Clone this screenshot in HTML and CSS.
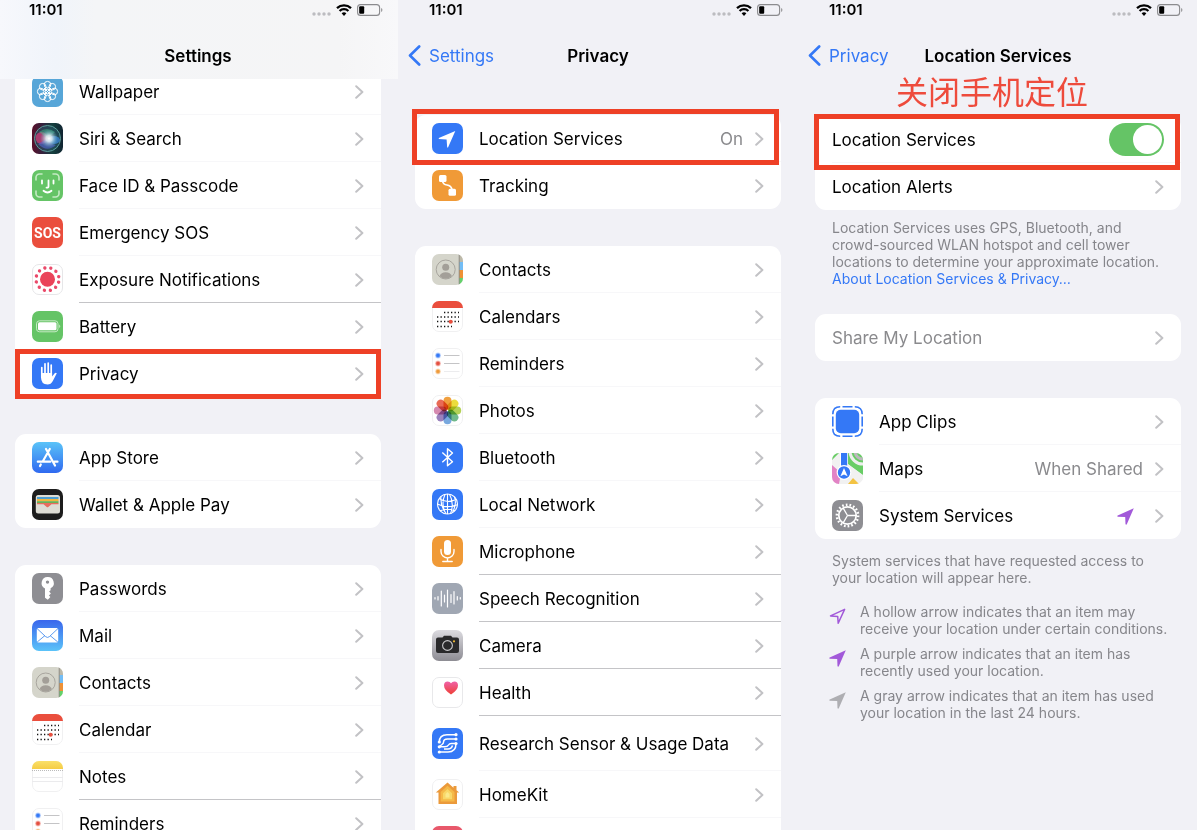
FILE: index.html
```html
<!DOCTYPE html>
<html lang="en">
<head>
<meta charset="utf-8">
<meta name="viewport" content="width=device-width, initial-scale=1">
<title>Location Services</title>
<link rel="stylesheet" href="styles.css">
</head>
<body>
<svg class="sprite" aria-hidden="true">
  <defs>
    <linearGradient id="g-store" x1="0" y1="0" x2="0" y2="1"><stop offset="0" stop-color="#5ac3f8"/><stop offset="1" stop-color="#2f69f0"/></linearGradient>
    <linearGradient id="g-mail" x1="0" y1="0" x2="0" y2="1"><stop offset="0" stop-color="#3a66ec"/><stop offset="1" stop-color="#5bc3f9"/></linearGradient>
    <linearGradient id="g-camera" x1="0" y1="0" x2="0" y2="1"><stop offset="0" stop-color="#dcdbe0"/><stop offset="1" stop-color="#8d8c93"/></linearGradient>
    <linearGradient id="g-heart" x1="0" y1="0" x2="0" y2="1"><stop offset="0" stop-color="#f062a8"/><stop offset="1" stop-color="#ee3f35"/></linearGradient>
    <linearGradient id="g-notes" x1="0" y1="0" x2="0" y2="1"><stop offset="0" stop-color="#fae06a"/><stop offset="1" stop-color="#f5cc45"/></linearGradient>
    <linearGradient id="g-siri" x1="0" y1="0" x2="1" y2="0"><stop offset="0" stop-color="#5a1029"/><stop offset=".35" stop-color="#34223f"/><stop offset=".65" stop-color="#15403f"/><stop offset="1" stop-color="#102431"/></linearGradient>
    <radialGradient id="g-siri-glow"><stop offset="0" stop-color="#fff"/><stop offset=".35" stop-color="#e6f2f7" stop-opacity=".85"/><stop offset="1" stop-color="#6db4cf" stop-opacity="0"/></radialGradient>
    <clipPath id="tile"><rect width="31" height="31" rx="7"/></clipPath>

    <symbol id="chevron" viewBox="0 0 9 14"><path d="M1.2 1.2 7.4 7 1.2 12.8" fill="none" stroke="#c2c2c5" stroke-width="2" stroke-linecap="round" stroke-linejoin="round"/></symbol>
    <symbol id="back" viewBox="0 0 13 21"><path d="M11.2 1.5 2 10.5l9.2 9" fill="none" stroke="#3478f6" stroke-width="2.6" stroke-linecap="round" stroke-linejoin="round"/></symbol>
    <symbol id="dots" viewBox="0 0 19 4"><g fill="#bcbcc0"><circle cx="2" cy="2" r="1.7"/><circle cx="7" cy="2" r="1.7"/><circle cx="12" cy="2" r="1.7"/><circle cx="17" cy="2" r="1.7"/></g></symbol>
    <symbol id="wifi" viewBox="0 0 16 12"><path d="M1 4.2a10.2 10.2 0 0 1 14 0M3.6 7a6.3 6.3 0 0 1 8.8 0" fill="none" stroke="#000" stroke-width="2.3"/><path d="M5.6 9.3a3.6 3.6 0 0 1 4.8 0L8 11.9z"/></symbol>
    <symbol id="cell" viewBox="0 0 26 12"><rect x=".6" y=".6" width="22" height="10.8" rx="3" fill="none" stroke="#8b8b8e" stroke-width="1.1"/><rect x="2.2" y="2.3" width="5" height="7.4" rx="1"/><path d="M24.2 4v4c1.6-.6 1.6-3.4 0-4z" fill="#8b8b8e"/></symbol>
    <symbol id="arrow" viewBox="0 0 17 17"><path d="M16.8.2 9.800 16.300Q9.200 17.200 8.500 16.300L8.200 9 .7 8.700Q-.2 8 .7 7.400z"/></symbol>
    <symbol id="arrow-hollow" viewBox="0 0 17 17"><path d="M15.6 1.4 9.200 15.300 8.700 8.400 1.500 7.900z" fill="none" stroke="#a259d9" stroke-width="1.5" stroke-linejoin="round"/></symbol>

    <symbol id="wallpaper" viewBox="0 0 31 31"><rect width="31" height="31" rx="7" fill="#57a6d8"/><g fill="none" stroke="#fff" stroke-width="1"><circle cx="15.5" cy="8.7" r="3.3"/><circle cx="15.5" cy="22.3" r="3.3"/><circle cx="8.7" cy="15.5" r="3.3"/><circle cx="22.3" cy="15.5" r="3.3"/><circle cx="10.7" cy="10.7" r="3.3"/><circle cx="20.3" cy="10.7" r="3.3"/><circle cx="10.7" cy="20.3" r="3.3"/><circle cx="20.3" cy="20.3" r="3.3"/><circle cx="15.5" cy="15.5" r="2.3"/><path d="M12 12l7 7M19 12l-7 7"/></g></symbol>
    <symbol id="siri" viewBox="0 0 31 31"><rect width="31" height="31" rx="7" fill="url(#g-siri)"/><circle cx="15.5" cy="15.5" r="13" fill="#29596a" fill-opacity=".55" stroke="#5c9c99"/><ellipse cx="9.500" cy="15" rx="6" ry="6" fill="#dc3f7c" opacity=".7"/><ellipse cx="22" cy="17" rx="6" ry="4" fill="#3b86d6" opacity=".75"/><path d="M7 9q8-6 16 0-5 5-8 6z" fill="#43b58a" opacity=".5"/><path d="M6 21q9 9 18 1-6-1-9-6z" fill="#5166c8" opacity=".65"/><circle cx="17" cy="15.500" r="9" fill="url(#g-siri-glow)"/></symbol>
    <symbol id="faceid" viewBox="0 0 31 31"><rect width="31" height="31" rx="7" fill="#65c466"/><path d="M4 10V7.500A3.500 3.500 0 0 1 7.500 4H10M21 4h2.500A3.500 3.500 0 0 1 27 7.500V10M27 21v2.500a3.500 3.500 0 0 1-3.500 3.500H21M10 27H7.500A3.500 3.500 0 0 1 4 23.500V21" fill="none" stroke="#c5eac4" stroke-width="1.600" stroke-linecap="round"/><path d="M10 10.500v3M21.500 10.500v3M16.500 10.500v6q0 1.400-2 1.200M11.500 20.800q4 3.500 8 0" fill="none" stroke="#fff" stroke-width="1.800" stroke-linecap="round"/></symbol>
    <symbol id="sos" viewBox="0 0 31 31"><rect width="31" height="31" rx="7" fill="#ea4e3d"/><text x="15.500" y="20.500" text-anchor="middle" class="sos-text">SOS</text></symbol>
    <symbol id="exposure" viewBox="0 0 31 31"><rect x=".5" y=".5" width="30" height="30" rx="6.500" fill="#fff" stroke="#e6e6e8"/><circle cx="15.500" cy="15.200" r="7.500" fill="#ea445a"/><g transform="rotate(15 15.500 15.200)"><circle cx="15.500" cy="15.200" r="11.500" fill="none" stroke="#ea4a6a" stroke-width="3.400" stroke-linecap="round" stroke-dasharray="0 6.021"/></g></symbol>
    <symbol id="battery" viewBox="0 0 31 31"><rect width="31" height="31" rx="7" fill="#65c466"/><rect x="4.500" y="9.800" width="21.500" height="11" rx="3" fill="none" stroke="#c5eac4" stroke-width="1"/><rect x="6" y="11.300" width="18.500" height="8" rx="1.500" fill="#fff"/><path d="M27.200 13.500v3.600q2.200-1.800 0-3.600z" fill="#c5eac4"/></symbol>
    <symbol id="privacy" viewBox="0 0 31 31"><rect width="31" height="31" rx="7" fill="#3478f6"/><path d="M9.800 9.500v10M13 5.800V18M16.200 5.200V18M19.200 7v12" stroke="#fff" stroke-width="1.700" stroke-linecap="round"/><path d="M9 15h11.100v3.500l2.600-3.200q1.200-1.200 2.100 0l-4 7.700q-1.800 3.500-5.300 3.500-6.500 0-6.500-7.500z" fill="#fff"/></symbol>
    <symbol id="appstore" viewBox="0 0 31 31"><rect width="31" height="31" rx="7" fill="url(#g-store)"/><path d="M17.800 7 11 19M14 7l2.500 4.300M17 12.500l6 11M5.800 19.700h12.500M22.500 19.700h3M8.800 22.500l-.8 1.500" fill="none" stroke="#fff" stroke-width="2.200" stroke-linecap="round"/></symbol>
    <symbol id="wallet" viewBox="0 0 31 31"><rect width="31" height="31" rx="7" fill="#1d1d1d"/><rect x="3.800" y="6" width="24.200" height="18.500" rx="2.500" fill="#deddd5"/><path d="M5 8h21.500v2H5z" fill="#4e9fd1"/><path d="M5 10h21.500v2.300H5z" fill="#f1b53f"/><path d="M5 12.200h21.500v2H5z" fill="#67b258"/><path d="M5 14h21.500v1.300h-7l-3.500 3h-1l-3.500-3H5z" fill="#e86c5e"/></symbol>
    <symbol id="key" viewBox="0 0 31 31"><rect width="31" height="31" rx="7" fill="#8e8e93"/><path fill-rule="evenodd" d="M15.500 4a6 6 0 0 0-2.500 11.400v9.300l2.800 2 2.600-2.600-1.500-1.700 2-1.900-1.800-1.900 1.500-1.400v-1.900A6 6 0 0 0 15.500 4zm0 3.400a1.700 1.700 0 1 1 0 3.400 1.700 1.700 0 0 1 0-3.400z" fill="#fff"/></symbol>
    <symbol id="mail" viewBox="0 0 31 31"><rect width="31" height="31" rx="7" fill="url(#g-mail)"/><rect x="4.800" y="8" width="21.400" height="14.500" rx="1.500" fill="#fff"/><path d="M5 8.500l8.700 8.200q1.800 1.500 3.600 0L26 8.500M5.200 22l7.800-6.500M25.800 22 18 15.500" fill="none" stroke="#4a90ee" stroke-width=".9"/></symbol>
    <symbol id="contacts" viewBox="0 0 31 31"><g clip-path="url(#tile)"><path d="M0 0h31v31H0z" fill="#d5d5cb"/><path d="M27 0h4v8h-4z" fill="#bdb9a9"/><path d="M27 8h4v8h-4z" fill="#73bdf5"/><path d="M27 16h4v8h-4z" fill="#ee9136"/><path d="M27 24h4v7h-4z" fill="#63d16a"/><path d="M27.200 0v31" stroke="#908f87" stroke-width="1"/></g><circle cx="13.700" cy="15.500" r="9.500" fill="none" stroke="#a39f98" stroke-width=".9"/><circle cx="13.700" cy="13.200" r="3.500" fill="#a39f98"/><path d="M7.500 22q1.500-3.800 6.200-3.800T19.900 22q-2.500 2.700-6.200 2.700T7.500 22z" fill="#a39f98"/></symbol>
    <symbol id="calendar" viewBox="0 0 31 31"><rect x=".5" y=".5" width="30" height="30" rx="6.500" fill="#fff" stroke="#f0f0f1"/><path d="M0 7a7 7 0 0 1 7-7h17a7 7 0 0 1 7 7z" fill="#ea4e3d"/><path d="M12 11.500h15M5 16h22M5 20.500h22M5 25.500h15" stroke="#111" stroke-width="1.300" stroke-dasharray="1.300 2.200"/><circle cx="18.700" cy="20.700" r="2" fill="#ea4e3d"/></symbol>
    <symbol id="notes" viewBox="0 0 31 31"><rect x=".5" y=".5" width="30" height="30" rx="6.500" fill="#fff" stroke="#f0f0f1"/><path d="M0 8V7a7 7 0 0 1 7-7h17a7 7 0 0 1 7 7v1z" fill="url(#g-notes)"/><path d="M0 9.500h31" stroke="#aaa" stroke-dasharray="1 1" stroke-width=".8"/><path d="M0 16.500h31M0 20.500h31" stroke="#ebebed"/></symbol>
    <symbol id="reminders" viewBox="0 0 31 31"><rect x=".5" y=".5" width="30" height="30" rx="6.500" fill="#fff" stroke="#f0f0f1"/><g stroke-width="1.500" stroke-opacity=".5"><circle cx="6" cy="7.500" r="2.200" fill="#3478f6" stroke="#8cb4fa"/><circle cx="6" cy="15.500" r="2.200" fill="#e34e3f" stroke="#f19b92"/><circle cx="6" cy="23.500" r="2.200" fill="#ef9a38" stroke="#f7cc9b"/></g><path d="M12 7.500h15.500M12 15.500h15.500" stroke="#c4c4c6"/><path d="M12 23.500h15.500" stroke="#ececee"/></symbol>
    <symbol id="photos" viewBox="0 0 31 31"><rect x=".5" y=".5" width="30" height="30" rx="6.500" fill="#fff" stroke="#f0f0f1"/><g class="petals"><rect x="11.500" y="1.800" width="8" height="13" rx="4" fill="#f0a03f"/><rect x="11.500" y="1.800" width="8" height="13" rx="4" fill="#ebdc3c" transform="rotate(45 15.500 15.500)"/><rect x="11.500" y="1.800" width="8" height="13" rx="4" fill="#b4d256" transform="rotate(90 15.500 15.500)"/><rect x="11.500" y="1.800" width="8" height="13" rx="4" fill="#6fb98b" transform="rotate(135 15.500 15.500)"/><rect x="11.500" y="1.800" width="8" height="13" rx="4" fill="#78a8de" transform="rotate(180 15.500 15.500)"/><rect x="11.500" y="1.800" width="8" height="13" rx="4" fill="#9b82bd" transform="rotate(225 15.500 15.500)"/><rect x="11.500" y="1.800" width="8" height="13" rx="4" fill="#d58ab0" transform="rotate(270 15.500 15.500)"/><rect x="11.500" y="1.800" width="8" height="13" rx="4" fill="#e96a55" transform="rotate(315 15.500 15.500)"/></g></symbol>
    <symbol id="location" viewBox="0 0 31 31"><rect width="31" height="31" rx="7" fill="#3478f6"/><path d="M23.300 8 16 24.500l-.8 0-.6-8.100L6.800 15.900v-.8z" fill="#fff"/></symbol>
    <symbol id="tracking" viewBox="0 0 31 31"><rect width="31" height="31" rx="7" fill="#f09a37"/><rect x="7" y="5" width="7.500" height="7" rx="1.500" fill="#fff"/><rect x="16.500" y="18.800" width="7.500" height="7" rx="1.500" fill="#fff"/><path d="M10.500 11q.5 3.500 4.500 4t5 4.500" fill="none" stroke="#fff" stroke-width="1.700"/></symbol>
    <symbol id="bluetooth" viewBox="0 0 31 31"><rect width="31" height="31" rx="7" fill="#3478f6"/><path d="M10.300 10.500 20.500 19.700 15.500 23.800V6.700l5 4.300-10.200 9.300" fill="none" stroke="#fff" stroke-width="1.400" stroke-linejoin="round"/></symbol>
    <symbol id="network" viewBox="0 0 31 31"><rect width="31" height="31" rx="7" fill="#3478f6"/><g fill="none" stroke="#fff" stroke-width="1.100"><circle cx="15.500" cy="15" r="10"/><path d="M13 5.400q-4.500 10 1 19.400M17.500 5.300q5 9 1 19.200M15.500 5v20M7 9.500q8 5.500 17.300.8M5.500 15q9 4.800 20 .8M8 21.800q7-3 15-.3M9 7.500q-1 9 5 17M22.500 8q2.500 7-2 15.500"/></g></symbol>
    <symbol id="mic" viewBox="0 0 31 31"><rect width="31" height="31" rx="7" fill="#f09a37"/><rect x="12" y="4" width="7" height="15" rx="3.500" fill="#fff"/><path d="M9 13.500v2a6.500 6.500 0 0 0 13 0v-2M15.500 22v3.500M10.800 25.500h9.400" fill="none" stroke="#fff" stroke-width="1.400" stroke-linecap="round"/></symbol>
    <symbol id="speech" viewBox="0 0 31 31"><rect width="31" height="31" rx="7" fill="#a0a7b3"/><path d="M3 14.500v1.500M6 13.500v3.500M9.300 8v15M12.500 12v7M15.500 7v17M19 11.500v8M22 8.500v12.500M25.300 13.500v3.500M28.300 14.500v1.500" stroke="#fff" stroke-width="1.200" stroke-linecap="round"/></symbol>
    <symbol id="camera" viewBox="0 0 31 31"><rect width="31" height="31" rx="7" fill="url(#g-camera)"/><path d="M6 7.500h4.500l1.500-1.700h7l1.500 1.700H25a2 2 0 0 1 2 2V21a2 2 0 0 1-2 2H6a2 2 0 0 1-2-2V9.500a2 2 0 0 1 2-2z" fill="#29292b"/><circle cx="15.500" cy="15.500" r="4.900" fill="none" stroke="#c9c9cb" stroke-width="1.100"/><circle cx="22" cy="11.300" r="1.100" fill="#edb834"/></symbol>
    <symbol id="health" viewBox="0 0 31 31"><rect x=".5" y=".5" width="30" height="30" rx="6.500" fill="#fff" stroke="#e8e8ea"/><path d="M19 17.500q-7-4.500-7-9 0-4 3.700-4 2.200 0 3.300 1.800 1.200-1.800 3.400-1.800 3.600 0 3.600 4 0 4.500-7 9z" fill="url(#g-heart)"/></symbol>
    <symbol id="research" viewBox="0 0 31 31"><rect width="31" height="31" rx="7" fill="#3478f6"/><g fill="none" stroke="#fff" stroke-width="1.500"><path d="M24 6.700h-9q-7.700 0-7.700 7.300M24 11h-8.500q-4 0-4 3.200 0 1.300-1.500 2.300t-2.700 2.300M7.300 18.800h5.200q3 0 4-1.800t3.500-1.500h4M7.300 24h8.700q8 0 8-8.500M12 21h4q3.500 0 4.500-3.500"/></g><g fill="#fff"><circle cx="24" cy="6.700" r="1.600"/><circle cx="24" cy="11" r="1.600"/><circle cx="24" cy="15.500" r="1.600"/><circle cx="7.300" cy="14" r="1.600"/><circle cx="7.300" cy="18.800" r="1.600"/><circle cx="7.300" cy="24" r="1.600"/></g></symbol>
    <symbol id="home" viewBox="0 0 31 31"><rect x=".5" y=".5" width="30" height="30" rx="6.500" fill="#fff" stroke="#f0f0f1"/><path d="M15.500 3.500 21.500 8.700V7h3v4.300l2.700 2.300H25V25H6.500V13.600H3.800z" fill="#eb9a3b"/><path d="M15.500 6.800 22.500 13v9.500H8.700V13z" fill="#f5b949"/><path d="M15.500 10l4.500 4.200v6H11v-6z" fill="#f8d768"/><path d="M15.500 13l2 2v3.500h-4V15z" fill="#fbe98c"/></symbol>
    <symbol id="media" viewBox="0 0 31 31"><rect width="31" height="31" rx="7" fill="#e8586b"/><path d="M12 22V10l9-2v12" fill="none" stroke="#fff" stroke-width="1.600"/><circle cx="10" cy="22" r="2.300" fill="#fff"/><circle cx="19" cy="20" r="2.300" fill="#fff"/></symbol>
    <symbol id="clips" viewBox="0 0 31 31"><g fill="none" stroke="#3478f6" stroke-width="1.600"><path d="M10.500.8h10M10.500 30.200h10M.8 10.500v10M30.200 10.500v10"/><path d="M.8 8.200Q.8 4.500 2.500 2.700 4.500.8 8.200.8M22.800.8q3.700 0 5.600 1.900 1.800 1.800 1.800 5.500M30.200 22.800q0 3.700-1.800 5.600-1.900 1.800-5.600 1.800M8.200 30.200q-3.700 0-5.700-1.800Q.8 26.500.8 22.800"/></g><rect x="3.800" y="3.800" width="23.400" height="23.400" rx="5" fill="#3478f6"/></symbol>
    <symbol id="maps" viewBox="0 0 31 31"><g clip-path="url(#tile)"><path d="M0 0h31v31H0z" fill="#f1f1f1"/><path d="M0 0h7L0 7zM16 0h15v22L16 11z" fill="#69cd66"/><path d="M0 12l9 8-2 11H0z" fill="#e283c5"/><path d="M16 31l5-6 6 6z" fill="#f3c343"/><path d="M18-2a13 13 0 0 0 14 13" fill="none" stroke="#eee" stroke-width="3"/><path d="M23-2a8 8 0 0 0 9 8" fill="none" stroke="#bdb8be" stroke-width="3"/><path d="M14 13l18 13" stroke="#f1f1f1" stroke-width="5"/><path d="M8 0h8v16H8z" fill="#fff"/><path d="M9 0h6.200v16H9z" fill="#3478f6"/></g><circle cx="12" cy="19.500" r="6.800" fill="#3478f6" stroke="#fff" stroke-width="1.200"/><path d="M12 15l3.600 8.200L12 21.500l-3.600 1.700z" fill="#fff"/></symbol>
    <symbol id="gear" viewBox="0 0 31 31"><rect width="31" height="31" rx="7" fill="#8e8e93"/><g fill="none" stroke="#fff"><circle cx="15.500" cy="15.500" r="8.700" stroke-width="1.700"/><circle cx="15.500" cy="15.500" r="10.700" stroke-width="2.400" stroke-dasharray="1.700 2.020"/><path d="M15.500 15.500h8.500M15.500 15.500l-4.300-7.400M15.500 15.500l-4.300 7.400" stroke-width="1.300"/></g></symbol>
  </defs>
</svg>

<main class="screens">
  <section class="phone" aria-label="Settings">
    <header class="top top-blur">
      <div class="status"><span class="time">11:01</span><span class="signals"><svg class="i-dots"><use href="#dots"/></svg><svg class="i-wifi"><use href="#wifi"/></svg><svg class="i-cell"><use href="#cell"/></svg></span></div>
      <div class="nav"><h1>Settings</h1></div>
    </header>
    <div class="content scrolled">
      <nav class="card">
        <a class="row" href="#"><svg class="icon"><use href="#wallpaper"/></svg><span class="body"><span class="label">Wallpaper</span><svg class="chev"><use href="#chevron"/></svg></span></a>
        <a class="row" href="#"><svg class="icon"><use href="#siri"/></svg><span class="body"><span class="label">Siri &amp; Search</span><svg class="chev"><use href="#chevron"/></svg></span></a>
        <a class="row" href="#"><svg class="icon"><use href="#faceid"/></svg><span class="body"><span class="label">Face ID &amp; Passcode</span><svg class="chev"><use href="#chevron"/></svg></span></a>
        <a class="row" href="#"><svg class="icon"><use href="#sos"/></svg><span class="body"><span class="label">Emergency SOS</span><svg class="chev"><use href="#chevron"/></svg></span></a>
        <a class="row strong" href="#"><svg class="icon"><use href="#exposure"/></svg><span class="body"><span class="label">Exposure Notifications</span><svg class="chev"><use href="#chevron"/></svg></span></a>
        <a class="row" href="#"><svg class="icon"><use href="#battery"/></svg><span class="body"><span class="label">Battery</span><svg class="chev"><use href="#chevron"/></svg></span></a>
        <a class="row marked marked-privacy" href="#"><svg class="icon"><use href="#privacy"/></svg><span class="body"><span class="label">Privacy</span><svg class="chev"><use href="#chevron"/></svg></span></a>
      </nav>
      <nav class="card">
        <a class="row" href="#"><svg class="icon"><use href="#appstore"/></svg><span class="body"><span class="label">App Store</span><svg class="chev"><use href="#chevron"/></svg></span></a>
        <a class="row" href="#"><svg class="icon"><use href="#wallet"/></svg><span class="body"><span class="label">Wallet &amp; Apple Pay</span><svg class="chev"><use href="#chevron"/></svg></span></a>
      </nav>
      <nav class="card">
        <a class="row" href="#"><svg class="icon"><use href="#key"/></svg><span class="body"><span class="label">Passwords</span><svg class="chev"><use href="#chevron"/></svg></span></a>
        <a class="row" href="#"><svg class="icon"><use href="#mail"/></svg><span class="body"><span class="label">Mail</span><svg class="chev"><use href="#chevron"/></svg></span></a>
        <a class="row" href="#"><svg class="icon"><use href="#contacts"/></svg><span class="body"><span class="label">Contacts</span><svg class="chev"><use href="#chevron"/></svg></span></a>
        <a class="row" href="#"><svg class="icon"><use href="#calendar"/></svg><span class="body"><span class="label">Calendar</span><svg class="chev"><use href="#chevron"/></svg></span></a>
        <a class="row strong" href="#"><svg class="icon"><use href="#notes"/></svg><span class="body"><span class="label">Notes</span><svg class="chev"><use href="#chevron"/></svg></span></a>
        <a class="row" href="#"><svg class="icon"><use href="#reminders"/></svg><span class="body"><span class="label">Reminders</span><svg class="chev"><use href="#chevron"/></svg></span></a>
      </nav>
    </div>
  </section>

  <section class="phone" aria-label="Privacy">
    <header class="top">
      <div class="status"><span class="time">11:01</span><span class="signals"><svg class="i-dots"><use href="#dots"/></svg><svg class="i-wifi"><use href="#wifi"/></svg><svg class="i-cell"><use href="#cell"/></svg></span></div>
      <div class="nav"><a class="back" href="#"><svg class="i-back"><use href="#back"/></svg>Settings</a><h1>Privacy</h1></div>
    </header>
    <div class="content spaced">
      <nav class="card">
        <a class="row marked marked-location" href="#"><svg class="icon"><use href="#location"/></svg><span class="body"><span class="label">Location Services</span><span class="value">On</span><svg class="chev"><use href="#chevron"/></svg></span></a>
        <a class="row" href="#"><svg class="icon"><use href="#tracking"/></svg><span class="body"><span class="label">Tracking</span><svg class="chev"><use href="#chevron"/></svg></span></a>
      </nav>
      <nav class="card">
        <a class="row" href="#"><svg class="icon"><use href="#contacts"/></svg><span class="body"><span class="label">Contacts</span><svg class="chev"><use href="#chevron"/></svg></span></a>
        <a class="row" href="#"><svg class="icon"><use href="#calendar"/></svg><span class="body"><span class="label">Calendars</span><svg class="chev"><use href="#chevron"/></svg></span></a>
        <a class="row" href="#"><svg class="icon"><use href="#reminders"/></svg><span class="body"><span class="label">Reminders</span><svg class="chev"><use href="#chevron"/></svg></span></a>
        <a class="row" href="#"><svg class="icon"><use href="#photos"/></svg><span class="body"><span class="label">Photos</span><svg class="chev"><use href="#chevron"/></svg></span></a>
        <a class="row" href="#"><svg class="icon"><use href="#bluetooth"/></svg><span class="body"><span class="label">Bluetooth</span><svg class="chev"><use href="#chevron"/></svg></span></a>
        <a class="row" href="#"><svg class="icon"><use href="#network"/></svg><span class="body"><span class="label">Local Network</span><svg class="chev"><use href="#chevron"/></svg></span></a>
        <a class="row strong" href="#"><svg class="icon"><use href="#mic"/></svg><span class="body"><span class="label">Microphone</span><svg class="chev"><use href="#chevron"/></svg></span></a>
        <a class="row strong" href="#"><svg class="icon"><use href="#speech"/></svg><span class="body"><span class="label">Speech Recognition</span><svg class="chev"><use href="#chevron"/></svg></span></a>
        <a class="row strong" href="#"><svg class="icon"><use href="#camera"/></svg><span class="body"><span class="label">Camera</span><svg class="chev"><use href="#chevron"/></svg></span></a>
        <a class="row strong" href="#"><svg class="icon"><use href="#health"/></svg><span class="body"><span class="label">Health</span><svg class="chev"><use href="#chevron"/></svg></span></a>
        <a class="row tall" href="#"><svg class="icon"><use href="#research"/></svg><span class="body"><span class="label">Research Sensor &amp; Usage Data</span><svg class="chev"><use href="#chevron"/></svg></span></a>
        <a class="row" href="#"><svg class="icon"><use href="#home"/></svg><span class="body"><span class="label">HomeKit</span><svg class="chev"><use href="#chevron"/></svg></span></a>
        <a class="row" href="#" aria-label="Media"><svg class="icon"><use href="#media"/></svg><span class="body"></span></a>
      </nav>
    </div>
  </section>

  <section class="phone phone-last" aria-label="Location Services">
    <header class="top">
      <div class="status"><span class="time">11:01</span><span class="signals"><svg class="i-dots"><use href="#dots"/></svg><svg class="i-wifi"><use href="#wifi"/></svg><svg class="i-cell"><use href="#cell"/></svg></span></div>
      <div class="nav"><a class="back" href="#"><svg class="i-back"><use href="#back"/></svg>Privacy</a><h1>Location Services</h1></div>
    </header>
    <div class="content">
      <p class="callout" lang="zh-CN">关闭手机定位</p>
      <div class="card">
        <div class="row plain marked marked-switch"><span class="body"><label class="label" for="loc">Location Services</label><input class="switch" id="loc" type="checkbox" role="switch" checked></span></div>
        <a class="row plain" href="#"><span class="body"><span class="label">Location Alerts</span><svg class="chev"><use href="#chevron"/></svg></span></a>
      </div>
      <p class="note note-about">Location Services uses GPS, Bluetooth, and<br>crowd-sourced WLAN hotspot and cell tower<br>locations to determine your approximate location.<br><a href="#">About Location Services &amp; Privacy…</a></p>
      <nav class="card card-share">
        <a class="row plain dim" href="#"><span class="body"><span class="label">Share My Location</span><svg class="chev"><use href="#chevron"/></svg></span></a>
      </nav>
      <nav class="card">
        <a class="row" href="#"><svg class="icon"><use href="#clips"/></svg><span class="body"><span class="label">App Clips</span><svg class="chev"><use href="#chevron"/></svg></span></a>
        <a class="row" href="#"><svg class="icon"><use href="#maps"/></svg><span class="body"><span class="label">Maps</span><span class="value">When Shared</span><svg class="chev"><use href="#chevron"/></svg></span></a>
        <a class="row" href="#"><svg class="icon"><use href="#gear"/></svg><span class="body"><span class="label">System Services</span><svg class="arrow purple inrow"><use href="#arrow"/></svg><svg class="chev"><use href="#chevron"/></svg></span></a>
      </nav>
      <p class="note note-system">System services that have requested access to<br>your location will appear here.</p>
      <ul class="legend">
        <li><svg class="arrow"><use href="#arrow-hollow"/></svg><span>A hollow arrow indicates that an item may<br>receive your location under certain conditions.</span></li>
        <li><svg class="arrow purple"><use href="#arrow"/></svg><span>A purple arrow indicates that an item has<br>recently used your location.</span></li>
        <li><svg class="arrow gray"><use href="#arrow"/></svg><span>A gray arrow indicates that an item has used<br>your location in the last 24 hours.</span></li>
      </ul>
    </div>
  </section>
</main>
</body>
</html>
```
FILE: styles.css
```css
* {
  box-sizing: border-box;
}

body {
  margin: 0;
  background: #f1f1f6;
  color: #000;
  font-family: Inter, "Noto Sans CJK SC", sans-serif;
  font-size: 17px;
  line-height: 22px;
}

a {
  color: inherit;
  text-decoration: none;
}

svg {
  display: block;
  flex: none;
}

.sprite {
  position: absolute;
  width: 0;
  height: 0;
}

.screens {
  display: grid;
  grid-template-columns: 400fr 400fr 397fr;
  height: 100vh;
  overflow: hidden;
}

.phone {
  --edge: 19px;
  min-width: 0;
  overflow: hidden;
}

.phone-last {
  --edge: 16px;
}

.top {
  display: flex;
  flex-direction: column;
  gap: 13px;
}

.top-blur {
  margin-right: 2px;
  background: linear-gradient(90deg, #f7f8fc 0, #f0f4fa 14%, #f4f5f7 24%, #f5f5f6 85%, #f8f8fa 100%);
}

.status {
  display: flex;
  align-items: center;
  justify-content: space-between;
  height: 19px;
  padding: 0 calc(var(--edge) - 2px) 0 29px;
}

.time {
  font-size: 15px;
  font-weight: 600;
}

.signals {
  display: flex;
  align-items: center;
  gap: 5px;
}

.top-blur .status {
  padding-right: 15px;
}

.i-dots {
  width: 19px;
  height: 4px;
  margin-top: 8px;
}

.i-wifi {
  width: 16px;
  height: 12px;
}

.i-cell {
  width: 26px;
  height: 12px;
}

.nav {
  display: grid;
  grid-template-columns: 1fr auto 1fr;
  align-items: center;
  height: 47px;
  padding: 0 calc(var(--edge) - 7px) 0 8px;
}

.top-blur .nav {
  padding-right: 10px;
}

.nav h1 {
  grid-column: 2;
  margin: 0;
  font-size: 17px;
  font-weight: 600;
}

.back {
  display: flex;
  align-items: center;
  gap: 8px;
  color: #3478f6;
}

.i-back {
  width: 13px;
  height: 21px;
}

.content {
  display: flex;
  flex-direction: column;
  gap: 37px;
  padding: 0 var(--edge) 0 15px;
}

.scrolled {
  overflow: hidden;
}

.scrolled .card:first-child {
  margin-top: -11px;
}

.spaced {
  padding-top: 36px;
}

.phone-last .content {
  gap: 0;
}

.card {
  border-radius: 11px;
  background: #fff;
}

.row {
  position: relative;
  display: flex;
  align-items: center;
  gap: 16px;
  height: 47px;
  padding-left: 17px;
}

.row.tall {
  height: 55px;
}

.icon {
  width: 31px;
  height: 31px;
}

.body {
  display: flex;
  flex: 1;
  align-items: center;
  align-self: stretch;
  min-width: 0;
  padding: 2px 17px 0 0;
  border-bottom: 1px solid #f7f7f9;
}

.row:last-child .body {
  border-bottom-color: transparent;
}

.strong .body {
  border-bottom-color: #c4c4c7;
}

.label {
  flex: 1;
  white-space: nowrap;
}

.value {
  margin-right: 12px;
  color: #8a8a8d;
}

.dim {
  color: #8a8a8d;
}

.chev {
  width: 9px;
  height: 14px;
}

.marked::after {
  position: absolute;
  z-index: 1;
  border: 5px solid #ee4026;
  content: "";
  pointer-events: none;
}

.marked-privacy::after {
  inset: -1px 0 -2px;
}

.marked-location::after {
  inset: -6px 2px -3px -3px;
}

.marked-switch::after {
  inset: -2px 1px -7px -1px;
}

.switch {
  width: 55px;
  height: 33px;
  margin: 0 0 2px;
  padding: 2px;
  appearance: none;
  border-radius: 17px;
  background: #a9a9ad;
}

.switch::before {
  display: block;
  width: 29px;
  height: 29px;
  border-radius: 50%;
  background: #fff;
  content: "";
}

.switch:checked {
  background: #65c466;
}

.switch:checked::before {
  margin-left: auto;
}

.callout {
  height: 37px;
  margin: 0;
  padding-right: 12px;
  color: #ee4b3c;
  font-family: "Noto Sans CJK SC", sans-serif;
  font-size: 32px;
  line-height: 22px;
  text-align: center;
}

.note {
  margin: 0;
  padding-left: 17px;
  color: #86868b;
  font-size: 14px;
  line-height: 17px;
  white-space: nowrap;
}

.note a {
  color: #3478f6;
}

.note-about {
  margin-top: 9px;
}

.card-share {
  margin: 27px 0 37px;
}

.note-system {
  margin-top: 13px;
}

.legend {
  display: flex;
  flex-direction: column;
  gap: 8px;
  margin: 17px 0 0;
  padding: 0 0 0 14px;
  color: #86868b;
  font-size: 14px;
  line-height: 17px;
  list-style: none;
  white-space: nowrap;
}

.legend li {
  display: flex;
  gap: 14px;
}

.arrow {
  width: 17px;
  height: 17px;
  margin-top: 5px;
}

.inrow {
  margin: 0 21px 0 0;
}

.purple {
  fill: #a259d9;
}

.gray {
  fill: #aeaeb2;
}

.sos-text {
  fill: #fff;
  font-family: Roboto, sans-serif;
  font-size: 14px;
  font-weight: 700;
}

.petals rect {
  mix-blend-mode: multiply;
}
```
